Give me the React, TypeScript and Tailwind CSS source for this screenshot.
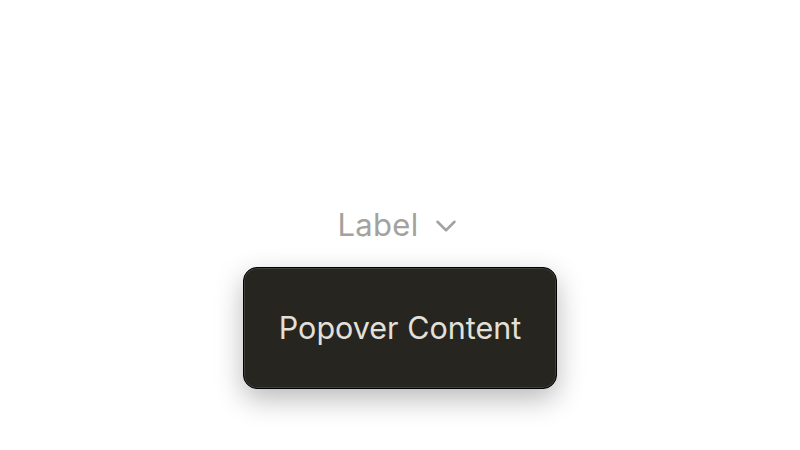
import { ChevronDown } from 'lucide-react';

export default function App() {
  return (
    <div className="w-[800px] h-[450px] bg-white flex items-center justify-center" style={{ fontFamily: 'Inter, "Noto Sans", sans-serif' }}>
      <div className="relative">
        {/* Trigger */}
        <button className="flex items-center gap-[10px] text-[#a3a29e] text-[31px] leading-[40px] tracking-[0.3px]">
          <span>Label</span>
          <ChevronDown size={34} strokeWidth={1.8} className="mt-[2px]" />
        </button>

        {/* Popover */}
        <div className="absolute left-1/2 -translate-x-1/2 top-[62px] w-[314px] h-[122px] rounded-[14px] bg-[#262520] border border-black shadow-[inset_0_0_0_1px_rgba(255,255,255,0.12),0_10px_28px_rgba(0,0,0,0.28)] flex items-center justify-center">
          <span className="text-[#e3e0da] text-[30.5px] whitespace-nowrap">Popover Content</span>
        </div>
      </div>
    </div>
  );
}
